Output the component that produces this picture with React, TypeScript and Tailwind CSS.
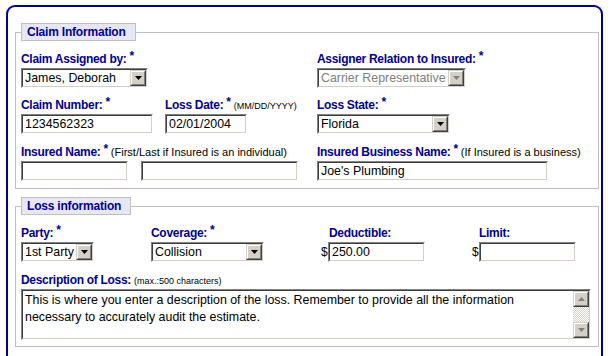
import React from "react";

const font = "font-['Liberation_Sans',Arial,sans-serif]";

const Sunken = ({ w, h = "h-[20px]", children }: { w: string; h?: string; children?: React.ReactNode }) => (
  <div className={`${w} ${h} border border-t-[#808080] border-l-[#808080] border-r-white border-b-white`}>
    <div className="h-full border border-t-[#404040] border-l-[#404040] border-r-[#d4d0c8] border-b-[#d4d0c8] bg-white flex">
      {children}
    </div>
  </div>
);

const Raised = ({ children, className = "" }: { children?: React.ReactNode; className?: string }) => (
  <div className={`w-[16px] h-[16px] shrink-0 border border-t-[#d4d0c8] border-l-[#d4d0c8] border-r-[#404040] border-b-[#404040] ${className}`}>
    <div className="h-full border border-t-white border-l-white border-r-[#808080] border-b-[#808080] bg-[#d4d0c8] flex items-center justify-center">
      {children}
    </div>
  </div>
);

const Arrow = ({ up = false, color = "#000" }: { up?: boolean; color?: string }) => (
  <svg width="7" height="4" viewBox="0 0 7 4">
    <polygon points={up ? "3.5,0 7,4 0,4" : "0,0 7,0 3.5,4"} fill={color} />
  </svg>
);

const Input = ({ w, value = "" }: { w: string; value?: string }) => (
  <Sunken w={w}>
    <div className="px-[2px] text-[12.4px] leading-[16px] text-black whitespace-nowrap">{value}</div>
  </Sunken>
);

const Select = ({ w, value, disabled = false }: { w: string; value: string; disabled?: boolean }) => (
  <Sunken w={w}>
    <div className={`flex-1 px-[2px] text-[12.4px] leading-[16px] whitespace-nowrap overflow-hidden ${disabled ? "text-[#808080]" : "text-black"}`}>
      {value}
    </div>
    <Raised>
      <Arrow color={disabled ? "#808080" : "#000"} />
    </Raised>
  </Sunken>
);

const Label = ({ text, star = true, note, small = false }: { text: string; star?: boolean; note?: string; small?: boolean }) => (
  <div className="h-[16px] leading-[15px] text-[12px] font-bold text-[#000099] whitespace-nowrap tracking-[-0.3px]">
    {text}
    {star && <span className="relative -top-[3px] ml-[3px] text-[12px]">*</span>}
    {note && (
      <span className={`font-normal text-black tracking-normal ml-[3px] ${small ? "text-[9px]" : "text-[11px]"}`}>{note}</span>
    )}
  </div>
);

const Legend = ({ text, w }: { text: string; w: string }) => (
  <legend className={`${w} h-[18px] leading-[16px] border border-[#c0c0c0] bg-[#e6e6f5] pl-[5px] text-[12px] font-bold text-[#000099] tracking-[-0.2px]`}>
    {text}
  </legend>
);

export default function App() {
  return (
    <div className={`${font} bg-white w-[612px] h-[356px] overflow-hidden`}>
      <div className="ml-[6px] mt-[5px] w-[597px] h-[400px] border-2 border-b-0 border-[#000099] rounded-t-[9px] pl-[7px] pt-[16px]">
        <fieldset className="w-[584px] border border-[#c0c0c0] pl-[5px] pt-[11px] pb-[7px]">
          <Legend text="Claim Information" w="w-[115px]" />
          <div className="flex flex-col gap-[10px]">
            <div className="flex">
              <div className="w-[296px]">
                <Label text="Claim Assigned by:" />
                <Select w="w-[127px]" value="James, Deborah" />
              </div>
              <div>
                <Label text="Assigner Relation to Insured:" />
                <Select w="w-[149px]" value="Carrier Representative" disabled />
              </div>
            </div>
            <div className="flex">
              <div className="w-[144px]">
                <Label text="Claim Number:" />
                <Input w="w-[132px]" value="1234562323" />
              </div>
              <div className="w-[152px]">
                <Label text="Loss Date:" note="(MM/DD/YYYY)" small />
                <Input w="w-[82px]" value="02/01/2004" />
              </div>
              <div>
                <Label text="Loss State:" />
                <Select w="w-[133px]" value="Florida" />
              </div>
            </div>
            <div className="flex mt-[1px]">
              <div className="w-[296px]">
                <Label text="Insured Name:" note="(First/Last if Insured is an individual)" />
                <div className="flex gap-[13px]">
                  <Input w="w-[107px]" />
                  <Input w="w-[157px]" />
                </div>
              </div>
              <div>
                <Label text="Insured Business Name:" note="(If Insured is a business)" />
                <Input w="w-[231px]" value="Joe's Plumbing" />
              </div>
            </div>
          </div>
        </fieldset>

        <fieldset className="mt-[8px] w-[584px] border border-[#c0c0c0] pl-[5px] pt-[11px] pb-[6px]">
          <Legend text="Loss information" w="w-[110px]" />
          <div className="flex">
            <div className="w-[130px]">
              <Label text="Party:" />
              <Select w="w-[73px]" value="1st Party" />
            </div>
            <div className="w-[170px]">
              <Label text="Coverage:" />
              <Select w="w-[113px]" value="Collision" />
            </div>
            <div className="w-[151px]">
              <div className="pl-[8px]">
                <Label text="Deductible:" star={false} />
              </div>
              <div className="flex items-center">
                <span className="w-[7px] text-[12px] text-black">$</span>
                <Input w="w-[97px]" value="250.00" />
              </div>
            </div>
            <div>
              <div className="pl-[7px]">
                <Label text="Limit:" star={false} />
              </div>
              <div className="flex items-center">
                <span className="w-[7px] text-[12px] text-black">$</span>
                <Input w="w-[97px]" />
              </div>
            </div>
          </div>
          <div className="mt-[11px]">
            <Label text="Description of Loss:" star={false} note="(max.:500 characters)" small />
            <Sunken w="w-[570px]" h="h-[51px]">
              <div className="flex-1 px-[2px] pt-[1px] text-[12.4px] leading-[17px] text-black">
                This is where you enter a description of the loss. Remember to provide all the information
                <br />
                necessary to accurately audit the estimate.
              </div>
              <div className="w-[16px] flex flex-col">
                <Raised>
                  <Arrow up color="#808080" />
                </Raised>
                <div className="flex-1 bg-[image:repeating-conic-gradient(#d4d0c8_0_25%,#fff_0_50%)] bg-[length:2px_2px]" />
                <Raised>
                  <Arrow color="#808080" />
                </Raised>
              </div>
            </Sunken>
          </div>
        </fieldset>
      </div>
    </div>
  );
}
